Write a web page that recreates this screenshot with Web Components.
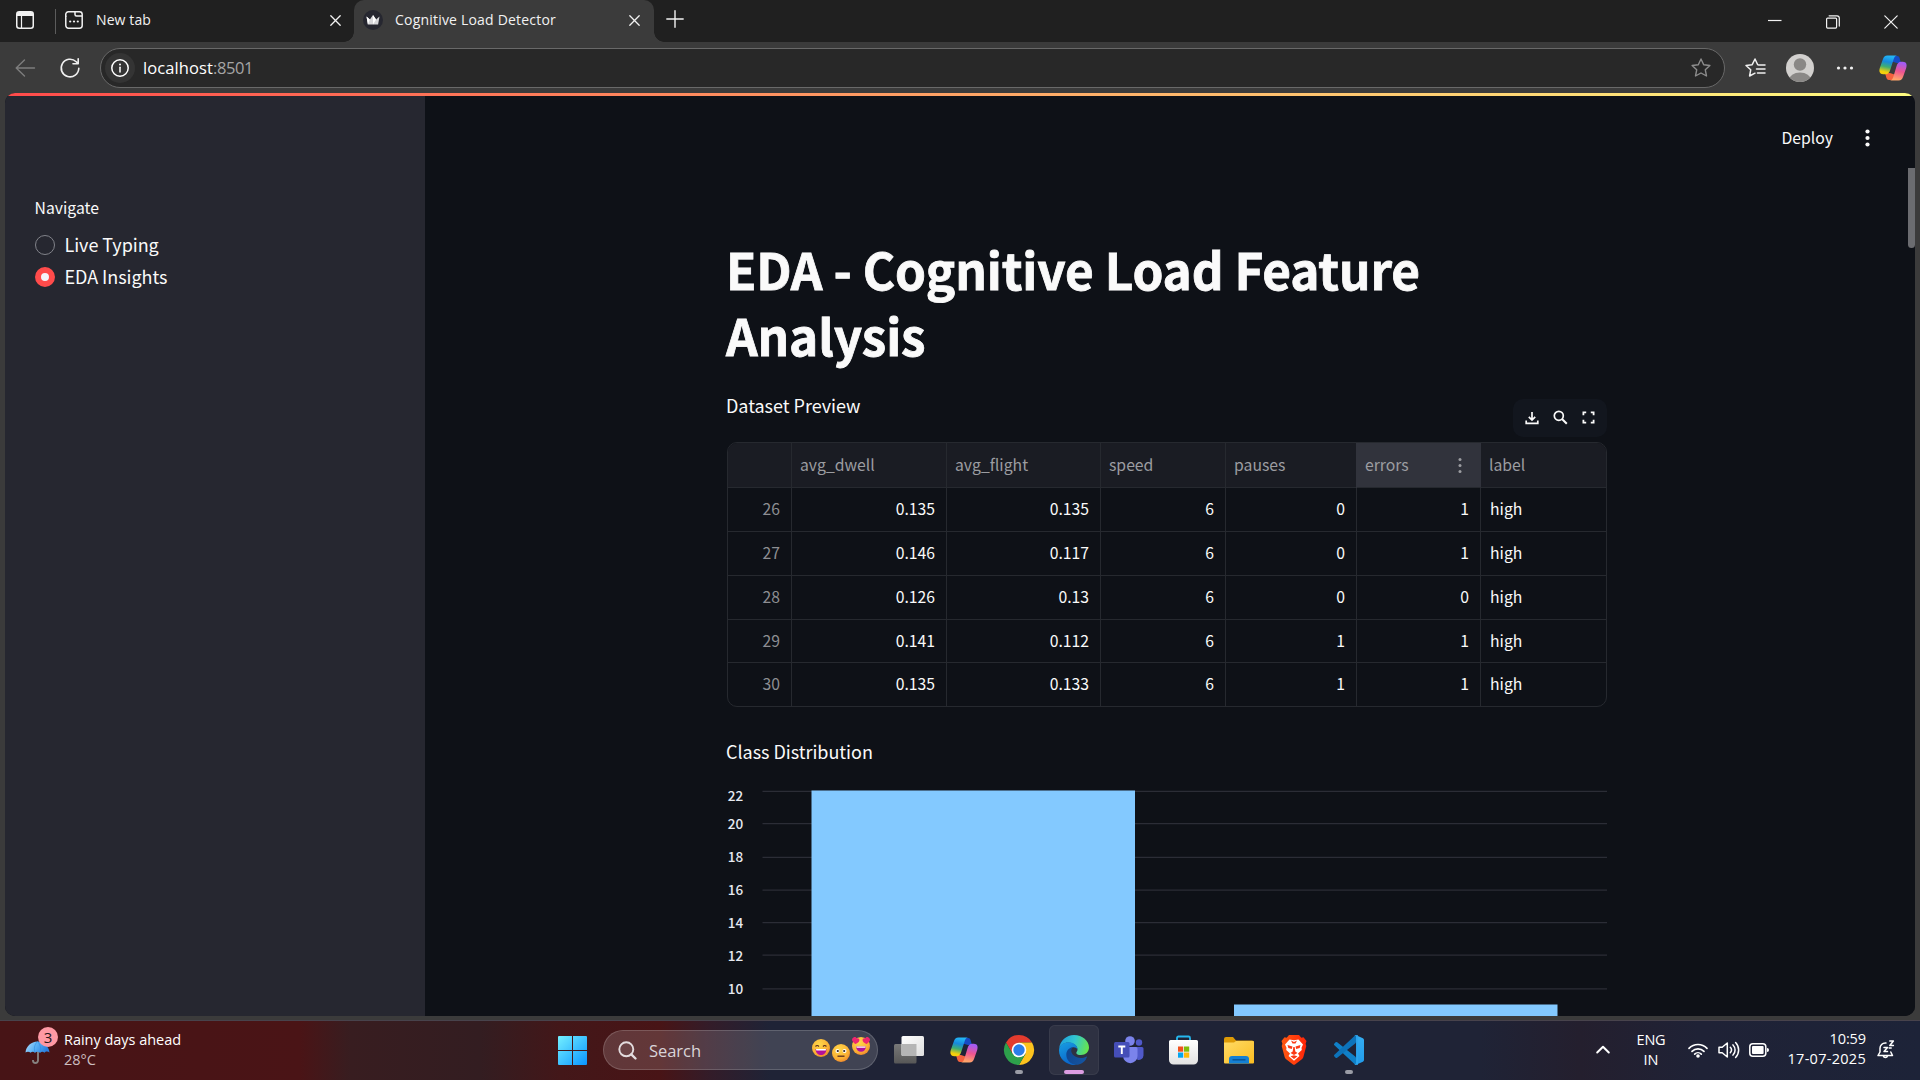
<!DOCTYPE html>
<html lang="en">
<head>
<meta charset="utf-8">
<title>Cognitive Load Detector</title>
<style>
html,body{margin:0;height:100%;overflow:hidden;background:#3b3b3b}
body{font-family:"Open Sans","Noto Sans",sans-serif}
</style>
</head>
<body>
<desktop-screen></desktop-screen>
<script>
const def=(name,html,init)=>{
  const t=document.createElement('template');t.innerHTML=html;
  customElements.define(name,class extends HTMLElement{
    connectedCallback(){
      if(this.shadowRoot)return;
      this.attachShadow({mode:'open'}).appendChild(t.content.cloneNode(true));
      if(init)init.call(this,this.shadowRoot);
    }
  });
};

/* Icon set: name -> [width, height, markup] */
const copilot=`<defs><linearGradient id="a" x1=".6" y1="0" x2=".4" y2="1"><stop offset=".05" stop-color="#22b4f5"/><stop offset=".35" stop-color="#1789dd"/><stop offset=".62" stop-color="#3fae72"/><stop offset=".9" stop-color="#f5cf0c"/></linearGradient><linearGradient id="b" x1=".6" y1="0" x2=".4" y2="1"><stop offset=".05" stop-color="#a45bf2"/><stop offset=".5" stop-color="#ee5590"/><stop offset=".95" stop-color="#ffa46a"/></linearGradient></defs>
<path d="M14 1h4c2 0 2.600 1.500 3.200 4.200L22 8h-4l-7-2z" fill="#164bc4"/><path d="M14 25h-4c-2 0-2.600-1.500-3.200-4.200L6 18h5l6 2z" fill="#f4623e"/>
<path d="M8.500.5H18c-2.200.3-3 2.500-3.600 4.500l-3.200 10c-.8 2.600-2 4.200-4.700 4.200H4.200C.6 19.200-.2 16.300.8 13L3.800 4.500C4.700 1.900 5.800.5 8.500.5z" fill="url(#a)"/>
<path d="M19.500 25.500H11c2.200-.3 3-2.500 3.600-4.500l3-10c.8-2.600 2-4.200 4.700-4.200h1.500c3.600 0 4.400 2.900 3.400 6.200l-3 8.500c-.9 2.600-2 4-4.700 4z" fill="url(#b)"/>`;
const face=`<defs><radialGradient id="f" cx=".4" cy=".3" r=".8"><stop offset="0" stop-color="#ffd84a"/><stop offset=".65" stop-color="#fbb034"/><stop offset="1" stop-color="#ea7a2c"/></radialGradient></defs><circle cx="9" cy="9" r="9" fill="url(#f)"/>`;
const S='fill="none" stroke="currentColor" stroke-linecap="round" stroke-linejoin="round"';
const ICONS={
tabsmenu:[18,18,`<rect x=".75" y=".75" width="16.500" height="16.500" rx="2.500" ${S} stroke-width="1.500"/><path d="M1 2.500A2 2 0 0 1 3 1h12a2 2 0 0 1 2 1.500V5H1z" fill="currentColor"/><path d="M5.500 5v12" ${S} stroke-width="1.200"/>`],
newtab:[18,18,`<path d="M.75 3.500A2.700 2.700 0 0 1 3.500.75h11a2.700 2.700 0 0 1 2.700 2.700v11a2.700 2.700 0 0 1-2.700 2.700h-11a2.700 2.700 0 0 1-2.700-2.700zM10 1v2.500a1.500 1.500 0 0 0 1.500 1.500H17M1 5.500V5" ${S} stroke-width="1.500"/><g fill="currentColor"><circle cx="5.200" cy="10.500" r="1.100"/><circle cx="9" cy="10.500" r="1.100"/><circle cx="12.800" cy="10.500" r="1.100"/></g>`],
x:[11,11,`<path d="M.8.8l9.400 9.400M10.200.8L.8 10.200" ${S} stroke-width="1.300"/>`],
plus:[18,18,`<path d="M9 .8v16.400M.8 9h16.400" ${S} stroke-width="1.400"/>`],
crown:[20,20,`<circle cx="10" cy="10" r="10" fill="#262730"/><path d="M3.500 6.500l3.400 3L10 5l3.100 4.500 3.400-3-1.400 8H4.900z" fill="#d7d7da"/><path d="M3.500 6.500l3.400 3-2 5z M13.100 9.500L10 5v9.500z" fill="#fff"/>`],
min:[14,14,`<path d="M0 5.500h13.500" stroke="currentColor" stroke-width="1.200"/>`],
restore:[14,14,`<rect x=".6" y="3.100" width="10" height="10" rx="1" ${S} stroke-width="1.200"/><path d="M3.100.8H11a2.300 2.300 0 0 1 2.300 2.300v8" ${S} stroke-width="1.200"/>`],
winx:[14,14,`<path d="M.8.8l12.400 12.400M13.200.8L.8 13.200" ${S} stroke-width="1.200"/>`],
back:[20,18,`<path d="M9.500 1L1.200 9l8.300 8M1.500 9H19.500" ${S} stroke-width="1.400"/>`],
reload:[20,20,`<path d="M18.800 10.200A8.800 8.800 0 1 1 16.200 3.800L18 5.600M18.200 .8v5H13" ${S} stroke-width="1.600"/>`],
info:[18,18,`<circle cx="9" cy="9" r="8.200" ${S} stroke-width="1.500"/><path d="M9 8.200v4.800" ${S} stroke-width="1.500"/><circle cx="9" cy="5.500" r="1" fill="currentColor"/>`],
star:[20,20,`<path d="M10 1l2.700 5.700 6.200.8-4.600 4.300 1.200 6.200L10 15l-5.500 3 1.200-6.200L1.100 7.500l6.200-.8z" ${S} stroke-width="1.400"/>`],
favs:[21,20,`<path d="M10 15.200L4.600 18l1.100-6.200L1 7.500l6.200-.8L10 1l2.700 5.700M13.500 6.900h6.500M11.500 11h8.500M12.500 15h7.500" ${S} stroke-width="1.500"/>`],
avatar:[28,28,`<defs><clipPath id="c"><circle cx="14" cy="14" r="14"/></clipPath></defs><circle cx="14" cy="14" r="14" fill="#d2d0ce"/><g clip-path="url(#c)" fill="#8a8886"><circle cx="14" cy="10.500" r="6.200"/><ellipse cx="14" cy="26" rx="11" ry="7.500"/></g>`],
dots:[18,4,`<g fill="currentColor"><circle cx="2.500" cy="2" r="1.600"/><circle cx="9" cy="2" r="1.600"/><circle cx="15.500" cy="2" r="1.600"/></g>`],
copilot:[28,26,copilot],
kebab:[5,18,`<g fill="currentColor"><circle cx="2.500" cy="2.500" r="2.100"/><circle cx="2.500" cy="9" r="2.100"/><circle cx="2.500" cy="15.500" r="2.100"/></g>`],
kebabs:[4,16,`<g fill="currentColor"><circle cx="2" cy="2.500" r="1.500"/><circle cx="2" cy="8.500" r="1.500"/><circle cx="2" cy="14.500" r="1.500"/></g>`],
download:[14,14,`<path d="M7 1v7.500M3.800 5.800L7 9l3.200-3.200M1.200 9.500v2.800h11.600V9.500" fill="none" stroke="currentColor" stroke-width="1.700"/>`],
search:[15,15,`<circle cx="5.800" cy="5.800" r="4.500" fill="none" stroke="currentColor" stroke-width="1.700"/><path d="M9 9l4.800 4.800" stroke="currentColor" stroke-width="2"/>`],
full:[13,13,`<path d="M4.200 1.400H1.400v2.800M8.800 1.400h2.800v2.800M1.400 8.800v2.800h2.800M11.600 8.800v2.800H8.800" fill="none" stroke="currentColor" stroke-width="1.800"/>`],
umbrella:[26,28,`<defs><linearGradient id="u" x2="1" y2=".3"><stop stop-color="#b3ddfb"/><stop offset=".5" stop-color="#5db3f5"/><stop offset="1" stop-color="#2b80e0"/></linearGradient></defs><path d="M13 12v9.500a2.500 2.500 0 0 1-5 0V21" fill="none" stroke="#85817f" stroke-width="1.900"/><path d="M.5 13.500C1 7.500 6 2.500 12.500 2.500S24 7.500 24.500 13.500c-1.500-1.300-4-1.200-5 .2-1.500-1.300-3-1.300-4.500 0-1.500-1.200-3.700-1.200-5 0-1.400-1.300-3-1.300-4.500 0-1.200-1.200-3.500-1.200-5-.2z" fill="url(#u)"/><path d="M12.500 2.500C9 6 9 10 10 13.700M12.500 2.500C16 6 16 10 15 13.700" fill="none" stroke="#318cdf" stroke-width=".6"/>`],
start:[29,29,`<defs><linearGradient id="s" gradientUnits="userSpaceOnUse" x1="0" y1="0" x2="29" y2="29"><stop stop-color="#74f0ff"/><stop offset="1" stop-color="#0a94ff"/></linearGradient></defs><path d="M0 1a1 1 0 0 1 1-1h13v14H0zM15 0h13a1 1 0 0 1 1 1v13H15zM0 15h14v14H1a1 1 0 0 1-1-1zM15 15h14v13a1 1 0 0 1-1 1H15z" fill="url(#s)"/>`],
find:[19,19,`<circle cx="8.300" cy="8.300" r="7" fill="#ffffff10" stroke="#e3dcde" stroke-width="1.900"/><path d="M13.300 13.300l4.200 4.200" stroke="#e3dcde" stroke-width="2.400" stroke-linecap="round"/>`],
grin:[18,18,face+`<path d="M3.500 7.500q1.700-2 3.400 0M11 7.500q1.700-2 3.400 0" fill="none" stroke="#5a2c1e" stroke-width="1.200"/><path d="M3.500 10h11c-.3 4-2.600 6-5.500 6s-5.200-2-5.500-6z" fill="#b3129a"/><path d="M4 10h10l-.3 1.500H4.300z" fill="#fff"/>`],
meh:[18,18,face+`<circle cx="5.500" cy="7" r="2" fill="#fff"/><circle cx="12.500" cy="7" r="2" fill="#fff"/><circle cx="5.800" cy="7" r="1.100" fill="#33221c"/><circle cx="12.200" cy="7" r="1.100" fill="#33221c"/><path d="M5.500 12.200h7" stroke="#5a2c1e" stroke-width="1.300"/>`],
love:[18,18,face+`<path d="M.2 1.800C1.800-.6 4-.2 4.600 1.500c1.500-1 3.300.3 2.700 2.300C6.700 5.600 5 6.400 3.300 7 1.500 5.500-.6 4 .2 1.800zM17.800 1.800C16.200-.6 14-.2 13.400 1.500c-1.500-1-3.300.3-2.700 2.300.6 1.800 2.300 2.600 4 3.200C16.500 5.500 18.600 4 17.800 1.800z" fill="#ee2670"/><path d="M4 9.500h10c-.3 3.500-2.300 5.200-5 5.200s-4.700-1.700-5-5.200z" fill="#b3129a"/><path d="M4.300 9.500h9.400l-.3 1.300H4.700z" fill="#fff"/>`],
taskview:[30,28,`<defs><linearGradient id="t" x2="1" y2="1"><stop stop-color="#fff"/><stop offset="1" stop-color="#dedede"/></linearGradient><linearGradient id="g" x2="0" y2="1"><stop stop-color="#787878"/><stop offset="1" stop-color="#575757"/></linearGradient></defs><rect y="8" width="22.500" height="19.500" rx="1.500" fill="url(#g)"/><rect x="7.500" width="22.500" height="20" rx="1.500" fill="url(#t)"/><path d="M7.500 8h15v12H9a1.500 1.500 0 0 1-1.500-1.500z" fill="#b5b5b5"/>`],
chrome:[30,30,`<path d="M2 7.500A15 15 0 0 1 28 7.500H15L8.500 18.750z" fill="#e33b2e"/><path d="M28 7.500A15 15 0 0 1 15 30L21.500 18.750 15 7.500z" fill="#fcc31e"/><path d="M15 30A15 15 0 0 1 2 7.500L8.500 18.750 15 22.500l6.500-3.750z" fill="#2da04b"/><circle cx="15" cy="15" r="7.300" fill="#fff"/><circle cx="15" cy="15" r="5.700" fill="#2b7de9"/>`],
edge:[30,30,`<defs><linearGradient id="e1" x1="0" y1=".3" x2="1" y2=".5"><stop stop-color="#1d9fe0"/><stop offset=".5" stop-color="#32c6cf"/><stop offset="1" stop-color="#67e54c"/></linearGradient><linearGradient id="e2" x2=".4" y2="1"><stop stop-color="#189fe2"/><stop offset="1" stop-color="#0a66cb"/></linearGradient><linearGradient id="e3" x2="1" y2=".4"><stop stop-color="#0f4590"/><stop offset="1" stop-color="#14539f"/></linearGradient></defs>
<path d="M.2 13.500C1 5.500 7.500 0 15 0c8.500 0 15 6 15 12.500 0 4.500-3.500 7.500-8 7.500-3 0-4.700-1.100-4.700-2.100 0-.8 1.200-1.300 1.200-3.300C18.500 10.500 14 7.500 9.500 7.500 5 7.500 1.500 10 .2 13.500z" fill="url(#e1)"/>
<path d="M.2 13.500C1.500 9.500 5.300 7.300 9.800 7.300c4.600 0 8.700 3 8.700 7.300-1-2-2.700-2.600-4.300-2.400C11 12.600 9 16 9.300 19.500c.4 5.500 4.500 9.500 8.200 10.300C8.500 31 0 24.500 0 15.500z" fill="url(#e2)"/>
<path d="M14.200 12.200C10 13.700 9.300 17 10 20c1 5 6 7.500 10.500 6.800 2.800-.4 5.500-1.600 7-3.600C25.500 27.200 21.500 29.700 17.500 29.800 11 29.500 7 24.500 7.300 19c.2-3.800 3.200-6.700 6.900-6.800z M14.200 12.200c-2.700 1.500-2.700 5.500.6 8.400 3.400 3 9 2.800 12.400 1.100.6-.3 1 .3.600.9-2.500 4-7.500 6.200-12 5C10.500 26 8.200 21.500 8.900 17.500c.5-3 2.500-5.200 5.300-5.300z" fill="url(#e3)"/>`],
teams:[30,28,`<circle cx="16" cy="5" r="4.800" fill="#7b83eb"/><circle cx="25" cy="6.500" r="3.200" fill="#5059c9"/><path d="M20 11h8a1.500 1.500 0 0 1 1.500 1.500v7a5 5 0 0 1-6 4.500z" fill="#5059c9"/><path d="M9 11h13a1.500 1.500 0 0 1 1.500 1.500V20a7.200 7.200 0 0 1-14.400 0z" fill="#7b83eb"/><rect y="6" width="15.500" height="15.500" rx="1.500" fill="#454eb8"/><path d="M4.300 10.500h7M7.800 10.500v7.500" stroke="#fff" stroke-width="1.900"/>`],
store:[30,30,`<defs><linearGradient id="w" x2="0" y2="1"><stop stop-color="#fff"/><stop offset="1" stop-color="#e2e2e2"/></linearGradient></defs><path d="M8 6V3a1.500 1.500 0 0 1 1.500-1.500h10A1.500 1.500 0 0 1 21 3v3" fill="none" stroke="#25b7ee" stroke-width="1.800"/><path d="M0 6.500A1.500 1.500 0 0 1 1.500 5h26A1.500 1.500 0 0 1 29 6.500V25a4.500 4.500 0 0 1-4.500 4.500h-20A4.500 4.500 0 0 1 0 25z" fill="url(#w)"/><path d="M9 11.500h5.200v5.200H9z" fill="#f0511e"/><path d="M15 11.500h5.200v5.200H15z" fill="#80bb0a"/><path d="M9 17.500h5.200v5.200H9z" fill="#05a5ef"/><path d="M15 17.500h5.200v5.200H15z" fill="#fdb90a"/>`],
folder:[30,27,`<defs><linearGradient id="y" x2="1" y2="1"><stop stop-color="#ffdb66"/><stop offset="1" stop-color="#fbbd21"/></linearGradient></defs><path d="M0 2a2 2 0 0 1 2-2h7l3 3.500h16a2 2 0 0 1 2 2V10H0z" fill="#dd9a06"/><path d="M0 5.500h10l2-1.500h17a1 1 0 0 1 1 1v20.500a1 1 0 0 1-1 1H1a1 1 0 0 1-1-1z" fill="url(#y)"/><path d="M5 26.500V22a3 3 0 0 1 3-3h14a3 3 0 0 1 3 3v4.500z" fill="#1580d3"/><path d="M8.500 22.800h13" stroke="#0a5598" stroke-width="1.500"/>`],
brave:[26,30,`<defs><linearGradient id="r" x2="1"><stop stop-color="#ff5a12"/><stop offset="1" stop-color="#ff2408"/></linearGradient></defs><path d="M8 0h10l2.300 2.700 2.200-.5L25.500 6l-.9 2.700.7 2.300-2.800 10.500c-.4 1.500-1 2.300-2 3L14 29.500q-1 .7-2 0L5.500 24.500c-1-.7-1.600-1.500-2-3L.7 11l.7-2.300L.5 6l3-3.800 2.200.5z" fill="url(#r)"/><path d="M8.500 4.500L13 5.300l4.500-.8 4.500 5-1.500 3.200.3 2.300-3.800 3.500 1.500 2.500L13 25.800 7.500 21 9 18.500 5.200 15l.3-2.300L4 9.500z" fill="#fff"/><path d="M6.500 10l5 1.500-.7 2.500-3.500-1zM19.500 10l-5 1.500.7 2.500 3.500-1zM12.300 12h1.400l.6 4.500L16.500 18 13 20l-3.500-2 2.200-1.500zM9.500 21.300L13 20.200l3.500 1.100L13 24zM10 5.500l3 1.500 3-1.500-1.500 3h-3z" fill="#fb3a16"/>`],
vscode:[30,30,`<defs><linearGradient id="v" x2="0" y2="1"><stop stop-color="#35adf1"/><stop offset="1" stop-color="#219bea"/></linearGradient></defs><path d="M21.500 21.800L3.200 7.300a1.300 1.300 0 0 0-1.600 0L.4 8.500a1.200 1.200 0 0 0 0 1.800L21 29.500l3-2z" fill="#1080c8"/><path d="M21.500 8.200L3.200 22.700a1.300 1.300 0 0 1-1.600 0L.4 21.500a1.200 1.200 0 0 1 0-1.800L21 .5l3 2z" fill="#0d73ba"/><path d="M22 29.800a1.900 1.900 0 0 1-1.800-.8c.7.600 2 .1 2-.9V1.900c0-1-1.300-1.500-2-.9a1.900 1.900 0 0 1 2-.7l6.700 3c.7.300 1.100.9 1.100 1.700v20c0 .8-.4 1.400-1.100 1.700z" fill="url(#v)"/><path d="M20.200 1c.7-.600 2-.1 2 .9v26.200c0 1-1.300 1.500-2 .9a2 2 0 0 0 1.800.8h2V.2h-2A2 2 0 0 0 20.200 1z" fill="#2ba5ee"/>`],
chev:[14,9,`<path d="M1.200 7.500L7 1.700l5.800 5.800" ${S} stroke-width="2"/>`],
wifi:[20,16,`<path d="M1 6.300a12.600 12.600 0 0 1 18 0M4 9.400a8.500 8.500 0 0 1 12 0M6.700 12.100a4.700 4.700 0 0 1 6.600 0" ${S} stroke-width="1.700"/><circle cx="10" cy="14" r="1.800" fill="currentColor"/>`],
vol:[21,18,`<path d="M1 6.300h3.200L9.300 2v14L4.200 11.700H1z" ${S} stroke-width="1.500"/><path d="M12.300 6.300a4 4 0 0 1 0 5.400M15 3.900a7.300 7.300 0 0 1 0 10.200M17.600 1.500a10.800 10.800 0 0 1 0 15" ${S} stroke-width="1.500"/>`],
batt:[20,14,`<rect x=".8" y=".8" width="16" height="12.400" rx="3" ${S} stroke-width="1.500"/><rect x="3" y="3" width="11.600" height="8" rx="1" fill="currentColor"/><path d="M18 5v4a2 2 0 0 0 2-2 2 2 0 0 0-2-2z" fill="currentColor"/>`],
bell:[18,20,`<path d="M9 3H8.300a5.300 5.300 0 0 0-5.300 5.300V12L1 15.500h14.500L13.800 12M6.300 16a2.200 2.200 0 0 0 4.200 0" ${S} stroke-width="1.500"/><path d="M7 7.500h3.500L7 11.500h3.500M12.800 1h3.600l-3.600 4.500h3.600M12.200 8h2" ${S} stroke-width="1.500"/>`]
};
def('ui-icon',`<style>:host{display:block;flex:none;line-height:0}svg{display:block;overflow:visible}</style><slot></slot>`,function(r){
  const[w,h,m]=ICONS[this.getAttribute('name')];
  r.innerHTML+=`<svg width="${w}" height="${h}" viewBox="0 0 ${w} ${h}">${m}</svg>`;
});

/* Single-line label whose tracking is tuned so that it spans the width in "w" */
def('ui-text',`<style>:host{display:block;flex:none;white-space:pre}span{display:inline-block}</style><span><slot></slot></span>`,function(r){
  const w=+this.getAttribute('w');if(!w)return;
  const s=r.querySelector('span'),n=this.textContent.length;
  s.style.letterSpacing=((w-s.getBoundingClientRect().width)/n).toFixed(3)+'px';
});

def('browser-tabs',`<style>
:host{display:flex;height:42px;background:#202020;color:#f2f2f2;font-size:14px;line-height:40px;box-sizing:border-box}
.lead{display:flex;align-items:center;height:40px;padding-left:16px;width:338px;box-sizing:border-box}
.sep{width:1px;height:25px;background:#5c5c5c;margin:2px 9px 0 21px}
.lead ui-text{margin-left:13px;flex:1}
.lead .x{margin:1px -3px 0 0}
.active{position:relative;display:flex;align-items:center;width:300px;height:42px;box-sizing:border-box;background:#3b3b3b;border-radius:10px 10px 0 0;margin-left:16px;padding:0 14px 2px 9px}
.active::before,.active::after{content:"";position:absolute;bottom:0;width:10px;height:10px}
.active::before{left:-10px;background:radial-gradient(circle at 0 0,#202020 9.500px,#3b3b3b 10px)}
.active::after{right:-10px;background:radial-gradient(circle at 100% 0,#202020 9.500px,#3b3b3b 10px)}
.active ui-text{margin-left:12px;flex:1}
.plus{margin:10px 0 0 12px}
.win{display:flex;gap:44px;margin:15px 22px 0 auto;height:14px}
</style>
<div class="lead"><ui-icon name="tabsmenu"></ui-icon><div class="sep"></div><ui-icon name="newtab"></ui-icon><ui-text w="55">New tab</ui-text><ui-icon class="x" name="x"></ui-icon></div>
<div class="active"><ui-icon name="crown"></ui-icon><ui-text w="161">Cognitive Load Detector</ui-text><ui-icon name="x"></ui-icon></div>
<ui-icon class="plus" name="plus"></ui-icon>
<div class="win"><ui-icon name="min"></ui-icon><ui-icon name="restore"></ui-icon><ui-icon name="winx"></ui-icon></div>`);

def('address-bar',`<style>
:host{display:flex;align-items:center;flex:none;box-sizing:border-box;width:1625px;height:40px;border:1px solid #696969;border-radius:20px;background:#282828;padding:0 13px 0 4px;font-size:16.500px;color:#fff}
.i{width:30px;height:30px;border-radius:50%;background:#343434;display:grid;place-items:center;margin-right:8px}
ui-text{margin-top:-2px}
.port{color:#a5a5a5;flex:1}.star{color:#8d8d8d}
</style><div class="i"><ui-icon name="info"></ui-icon></div><ui-text w="70">localhost</ui-text><ui-text class="port" w="40">:8501</ui-text><ui-icon class="star" name="star"></ui-icon>`);

def('browser-toolbar',`<style>
:host{display:flex;align-items:center;height:51px;box-sizing:border-box;padding:1px 13px 0 15px;background:#3b3b3b;color:#f0f0f0}
.b{color:#7d7d7d;margin-right:25px}.r{margin-right:20px}.f{margin:0 20px}.d{margin:0 25px 0 22px}
</style><ui-icon class="b" name="back"></ui-icon><ui-icon class="r" name="reload"></ui-icon><address-bar></address-bar>
<ui-icon class="f" name="favs"></ui-icon><ui-icon name="avatar"></ui-icon><ui-icon class="d" name="dots"></ui-icon><ui-icon name="copilot"></ui-icon>`);

def('radio-option',`<style>
:host{display:flex;align-items:center;height:32px;line-height:32px;font-size:18px}
i{width:20px;height:20px;border-radius:50%;box-sizing:border-box;border:1px solid #82838a;margin-right:9.500px;display:block}
:host([checked]) i{border:6.500px solid #ff4b4b;background:#f4f5fb}
ui-text{margin-top:-3px;letter-spacing:-.05px}
</style><i></i><ui-text><slot></slot></ui-text>`);

def('app-sidebar',`<style>
:host{display:block;width:420px;flex:none;background:#262730;box-sizing:border-box;padding:100px 0 0 30px}
.l{font-size:15.750px;line-height:24px;margin:0 0 9px -.5px}
</style><ui-text class="l">Navigate</ui-text><radio-option>Live Typing</radio-option><radio-option checked>EDA Insights</radio-option>`);

def('data-grid',`<style>
:host{display:block;position:relative}
.g{display:grid;grid-template-columns:64px 155px 154px 125px 131px 124px 125px;grid-template-rows:45px 44px 44px 44px 43px 43px;border:1px solid #26292f;border-radius:10px;overflow:hidden;font-size:15.750px;color:#fafafa;height:263px}
.g>div{box-sizing:border-box;border-right:1px solid #26292f;border-bottom:1px solid #26292f;padding:0 11px 1px 8px;text-align:right;line-height:42px}
.g>.h{background:#1a1c23;color:#9c9da1;text-align:left;line-height:42px;display:flex;justify-content:space-between;align-items:center;padding-bottom:0}
.g>.on{background:#31333c;border-right-color:#31333c;padding-right:18px;box-shadow:-1px 0 #31333c}
.g>.n{color:#8d8e92}.g>.t{text-align:left;padding-left:9px}
.g>.e{border-right:0}.g>.z{border-bottom:0}
.bar{position:absolute;right:0;top:-43px;width:94px;height:38px;box-sizing:border-box;background:#12161e;border-radius:10px;display:flex;align-items:center;justify-content:space-between;padding:0 12.500px 1px 12px;color:#fafafa}
</style><div class="g"></div><div class="bar"><ui-icon name="download"></ui-icon><ui-icon name="search"></ui-icon><ui-icon name="full"></ui-icon></div>`,function(r){
  const cols=['','avg_dwell','avg_flight','speed','pauses','errors','label'];
  const rows=[[26,'0.135','0.135',6,0,1,'high'],[27,'0.146','0.117',6,0,1,'high'],[28,'0.126','0.13',6,0,0,'high'],[29,'0.141','0.112',6,1,1,'high'],[30,'0.135','0.133',6,1,1,'high']];
  r.querySelector('.g').innerHTML=cols.map((c,i)=>`<div class="h${i==5?' on':''}${i==6?' e':''}"><span>${c}</span>${i==5?'<ui-icon name="kebabs"></ui-icon>':''}</div>`).join('')
   +rows.map((w,j)=>w.map((v,i)=>`<div class="${i?'':'n'}${i==6?' t e':''}${j==4?' z':''}">${v}</div>`).join('')).join('');
});

def('bar-chart',`<style>:host{display:block}svg{display:block}text{font-size:13.500px;font-weight:500;fill:#e6eaf1}</style><svg width="880" height="236"></svg>`,function(r){
  const ticks=[[22,11.3,21],[20,43.6,49],[18,77.4,82.3],[16,110,115.3],[14,142.5,148],[12,175,181],[10,208.8,214]];
  r.querySelector('svg').innerHTML=ticks.map(([v,y,b])=>`<path d="M35.500 ${y}H880" stroke="#2b2d36" stroke-width="1.250"/><text x=".8" y="${b}">${v}</text>`).join('')
   +'<path d="M84.500 10.500h323.500V240H84.500zM507 224.500h323.500V240H507z" fill="#83c9ff"/>';
});

def('app-main',`<style>
:host{display:block;flex:1;min-width:0;background:#0e1117;color:#fafafa;overflow:hidden;position:relative}
header{display:flex;justify-content:flex-end;align-items:center;height:82px;padding-right:45px;font-size:15.750px;line-height:24px}
header ui-icon{margin:2px 0 0 32px}
header ui-text{margin-top:2px}
main{width:880px;margin-left:302px}
h1{margin:58px 0 22px -1px;font-size:49.500px;line-height:66px;font-weight:700;letter-spacing:-.17px;-webkit-text-stroke:.8px currentColor}
p{margin:0 0 0 -1px;font-size:18px;line-height:30px;letter-spacing:-.03px}
data-grid{margin:22px 0 29px}bar-chart{margin-top:14px}
.thumb{position:absolute;right:0;top:72px;width:7px;height:80px;background:#6b6c70;border-radius:0 0 4px 4px}
</style><header><ui-text>Deploy</ui-text><ui-icon name="kebab"></ui-icon></header>
<main><h1>EDA - Cognitive Load Feature<br>Analysis</h1><p>Dataset Preview</p><data-grid></data-grid><p>Class Distribution</p><bar-chart></bar-chart></main><div class="thumb"></div>`);

def('app-page',`<style>
:host{display:flex;flex-direction:column;height:923px;margin:0 5px;border-radius:10px;overflow:hidden;color:#fafafa;font-family:"Noto Sans CJK SC","Source Sans Pro",sans-serif;background:#0e1117}
.top{height:3px;flex:none;background:linear-gradient(90deg,#ff4b4b,#fffd80)}
.row{display:flex;flex:1;min-height:0}
</style><div class="top"></div><div class="row"><app-sidebar></app-sidebar><app-main></app-main></div>`);

def('task-app',`<style>
:host{display:grid;place-items:center;width:50px;height:50px;border-radius:6px;box-sizing:border-box;position:relative;flex:none}
:host([active]){background:#2e3142;box-shadow:inset 0 0 0 1px #383b4b}
b{position:absolute;left:21px;bottom:1px;width:8px;height:4px;border-radius:2px;background:#9a9ca6;display:none}
:host([running]) b{display:block}:host([active]) b{display:block;width:20px;left:15px;background:#dc9de2}
</style><slot></slot><b></b>`);

def('task-bar',`<style>
:host{display:flex;position:relative;height:60px;box-sizing:border-box;border-top:1px solid #48434c;color:#fff;font-size:14.500px;line-height:20px;
background:linear-gradient(90deg,#471416 0,#4a1416 300px,#381d20 350px,#331d21 480px,#431719 560px,#481416 660px,#331c29 710px,#1f2336 770px,#1f2336 1480px,#241f2e 1580px,#1f2236 1700px,#1d2338 1920px)}
.weather{display:flex;align-items:flex-start;width:558px;box-sizing:border-box;padding:9px 0 0 25px}
.u{position:relative;width:26px;margin:9px 13px 0 0}
.badge{position:absolute;left:13px;top:-12px;width:20px;height:20px;border-radius:50%;background:#ff99a4;color:#26161a;text-align:center;line-height:20px;font-size:15px}
.dim{color:#cdbfc0}
.start{margin:15px 16px 0 0}
.search{display:flex;align-items:center;box-sizing:border-box;width:275px;height:40px;margin-top:9px;border-radius:20px;border:1px solid #ffffff2a;background:#ffffff26;padding:0 7px 0 14px;font-size:16.500px;color:#d9d4d8}
.search ui-text{margin:1px 0 0 12px;flex:1}
.em{display:flex;gap:2px}.em :nth-child(2){margin-top:5px}.em :nth-child(3){margin-top:-2px}
.apps{display:flex;gap:5px;margin:4px 0 0 6px}
.tray{display:flex;align-items:center;margin-left:auto;padding:0 25px 2px 0;text-align:right}
.lang{display:flex;flex-direction:column;align-items:center;margin:1px 22px 0 27px}
.time{display:flex;flex-direction:column;align-items:flex-end;margin:-1px 11px 0 19px}
</style>
<div class="weather"><div class="u"><ui-icon name="umbrella"></ui-icon><div class="badge">3</div></div><div><ui-text w="117">Rainy days ahead</ui-text><ui-text class="dim" w="32">28°C</ui-text></div></div>
<ui-icon class="start" name="start"></ui-icon>
<div class="search"><ui-icon name="find"></ui-icon><ui-text w="52">Search</ui-text><div class="em"><ui-icon name="grin"></ui-icon><ui-icon name="meh"></ui-icon><ui-icon name="love"></ui-icon></div></div>
<div class="apps"><task-app><ui-icon name="taskview"></ui-icon></task-app><task-app><ui-icon name="copilot"></ui-icon></task-app><task-app running><ui-icon name="chrome"></ui-icon></task-app><task-app active><ui-icon name="edge"></ui-icon></task-app><task-app><ui-icon name="teams"></ui-icon></task-app><task-app><ui-icon name="store"></ui-icon></task-app><task-app><ui-icon name="folder"></ui-icon></task-app><task-app><ui-icon name="brave"></ui-icon></task-app><task-app running><ui-icon name="vscode"></ui-icon></task-app></div>
<div class="tray"><ui-icon name="chev"></ui-icon><div class="lang"><ui-text w="29">ENG</ui-text><ui-text w="15">IN</ui-text></div><ui-icon name="wifi"></ui-icon><ui-icon name="vol" style="margin:0 10px"></ui-icon><ui-icon name="batt"></ui-icon><div class="time"><ui-text w="36.500">10:59</ui-text><ui-text w="78.500">17-07-2025</ui-text></div><ui-icon name="bell"></ui-icon></div>`);

def('desktop-screen',`<style>:host{display:flex;flex-direction:column;width:1920px;height:1080px;background:#3b3b3b;overflow:hidden}task-bar{margin-top:auto}</style>
<browser-tabs></browser-tabs><browser-toolbar></browser-toolbar><app-page></app-page><task-bar></task-bar>`);
</script>
</body>
</html>
